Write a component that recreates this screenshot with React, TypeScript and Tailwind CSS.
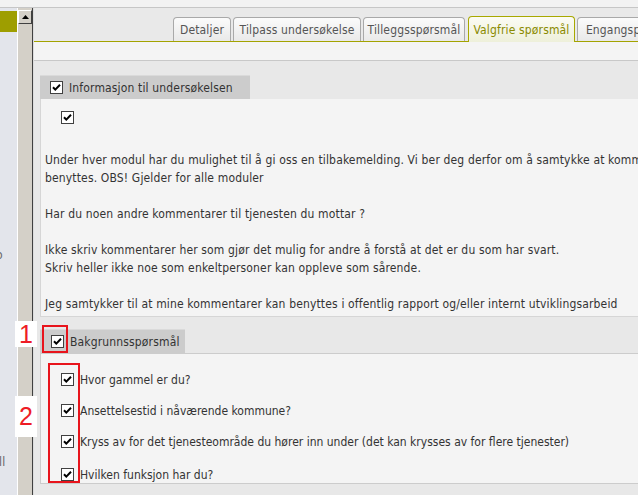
import type { ReactNode } from "react";

function Check() {
  return (
    <svg width="13" height="13" viewBox="0 0 13 13" className="shrink-0">
      <rect x="0.5" y="0.5" width="12" height="12" fill="#ffffff" stroke="#404040" />
      <path d="M3 6.2 L5.3 8.6 L10 3.8" fill="none" stroke="#000000" strokeWidth="2" />
    </svg>
  );
}

function Tab({ label, width, active }: { label: string; width: string; active?: boolean }) {
  if (active) {
    return (
      <div
        className={`${width} -mb-px flex h-[26px] shrink-0 items-center justify-center rounded-t-[4px] border border-b-0 border-[#a8a800] bg-gradient-to-b from-[#fbfbf4] to-[#eef0da] text-[#8a8a00]`}
      >
        {label}
      </div>
    );
  }
  return (
    <div
      className={`${width} flex h-[24px] shrink-0 items-center justify-center rounded-t-[4px] border border-b-0 border-[#a9a9a9] bg-gradient-to-b from-[#fbfbfb] to-[#e9e9e9] text-[#555555]`}
    >
      {label}
    </div>
  );
}

function SectionHeader({ width, pad, children }: { width: string; pad: string; children: ReactNode }) {
  return (
    <div className={`${width} ${pad} flex h-[24px] items-center gap-[6px] border-t border-[#dadada] bg-[#cccccc] text-[#333333]`}>
      <Check />
      <span>{children}</span>
    </div>
  );
}

const questions = [
  { text: "Hvor gammel er du?", gap: "mt-0" },
  { text: "Ansettelsestid i nåværende kommune?", gap: "mt-[18px]" },
  { text: "Kryss av for det tjenesteområde du hører inn under (det kan krysses av for flere tjenester)", gap: "mt-[18px]" },
  { text: "Hvilken funksjon har du?", gap: "mt-[20px]" },
];

export default function App() {
  return (
    <div className="relative flex h-[495px] w-[638px] flex-col overflow-hidden bg-[#e8e8e8] font-['DejaVu_Sans_Condensed','Liberation_Sans',sans-serif] text-[12px] tracking-[0.15px] text-[#333333]">
      <div className="h-[8px] shrink-0 border-b border-[#c6c6c6] bg-[#f2f2f2]" />

      <div className="flex min-h-0 flex-1">
        {/* left nav */}
        <div className="flex w-[17px] shrink-0 flex-col overflow-hidden bg-[#e3e5eb] pt-[3px] text-[#666666]">
          <div className="h-[21px] bg-[#9e9e00]" />
          <div className="-ml-[4px] mt-[217px] leading-[12px]">o</div>
          <div className="-ml-[1px] mt-[195px] leading-[12px]">ll</div>
        </div>
        <div className="w-px shrink-0 bg-white" />

        {/* scrollbar */}
        <div className="flex w-[14px] shrink-0 flex-col bg-[#d4d0c8] pt-[2px]">
          <div className="flex h-[14px] items-center justify-center border border-b-[#404040] border-l-white border-r-[#404040] border-t-white bg-[#d4d0c8]">
            <svg width="7" height="4" viewBox="0 0 7 4">
              <path d="M3.5 0 L7 4 L0 4 Z" fill="#000000" />
            </svg>
          </div>
        </div>
        <div className="w-px shrink-0 bg-[#404040]" />

        {/* main */}
        <div className="flex min-w-0 flex-1 flex-col border-l border-[#dcdcdc]">
          <div className="flex h-[34px] shrink-0 items-end gap-[2px] border-b border-[#a3a300] bg-[#e9e9e9] pl-[139px]">
            <Tab label="Detaljer" width="w-[58px]" />
            <Tab label="Tilpass undersøkelse" width="w-[128px]" />
            <Tab label="Tilleggsspørsmål" width="w-[102px] mr-px" />
            <Tab label="Valgfrie spørsmål" width="w-[107px]" active />
            <Tab label="Engangspørsmål" width="w-[110px]" />
          </div>
          <div className="h-[19px] shrink-0 border-b border-[#c8c8c8] bg-[#f4f4f4]" />

          <div className="flex min-w-0 flex-col pl-[6px] pt-[14px]">
            {/* Informasjon */}
            <SectionHeader width="w-[210px]" pad="pl-[10px]">
              Informasjon til undersøkelsen
            </SectionHeader>
            <div className="w-[760px] border-b border-l border-[#d6d6d6] bg-[#f4f4f4] pb-[3px] pt-[12px]">
              <div className="pl-[20px]">
                <Check />
              </div>
              <div className="mt-[27px] whitespace-nowrap pl-[4px] leading-[18px]">
                Under hver modul har du mulighet til å gi oss en tilbakemelding. Vi ber deg derfor om å samtykke at kommentarer kan
                <br />
                benyttes. OBS! Gjelder for alle moduler
                <br />
                <br />
                Har du noen andre kommentarer til tjenesten du mottar ?
                <br />
                <br />
                Ikke skriv kommentarer her som gjør det mulig for andre å forstå at det er du som har svart.
                <br />
                Skriv heller ikke noe som enkeltpersoner kan oppleve som sårende.
                <br />
                <br />
                Jeg samtykker til at mine kommentarer kan benyttes i offentlig rapport og/eller internt utviklingsarbeid
              </div>
            </div>

            {/* Bakgrunn */}
            <div className="mt-[12px]">
              <SectionHeader width="w-[145px]" pad="pl-[11px]">
                Bakgrunnsspørsmål
              </SectionHeader>
            </div>
            <div className="w-[760px] border-b border-l border-t border-[#cccccc] bg-[#f4f4f4] pb-[2px] pl-[20px] pt-[19px] tracking-normal">
              {questions.map((q) => (
                <div key={q.text} className={`${q.gap} flex h-[13px] items-center gap-[6px] whitespace-nowrap`}>
                  <Check />
                  <span>{q.text}</span>
                </div>
              ))}
            </div>
          </div>
        </div>
      </div>

      {/* annotations */}
      <div className="absolute left-[15px] top-[321px] flex h-[26px] w-[22px] items-center justify-center bg-white font-['Liberation_Sans',sans-serif] text-[25px] leading-none tracking-normal text-[#ee1c25]">
        1
      </div>
      <div className="absolute left-[42px] top-[325px] h-[28px] w-[26px] border-2 border-[#e8141c]" />
      <div className="absolute left-[15px] top-[396px] flex h-[41px] w-[22px] items-center justify-center bg-white font-['Liberation_Sans',sans-serif] text-[25px] leading-none tracking-normal text-[#ee1c25]">
        2
      </div>
      <div className="absolute left-[48px] top-[363px] h-[120px] w-[32px] border-2 border-[#e8141c]" />
    </div>
  );
}
